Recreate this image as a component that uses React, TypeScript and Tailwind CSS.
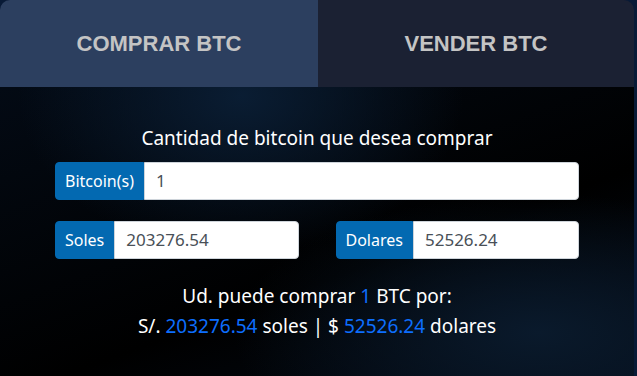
import React from "react";

const Group = ({ label, value, className = "" }: { label: string; value: string; className?: string }) => (
  <div className={`flex h-[38px] ${className}`}>
    <span className="flex items-center px-[9px] bg-[#0369b1] text-white text-[16px] rounded-l-[4px] border border-[#0369b1]">
      {label}
    </span>
    <div className="flex-1 flex items-center pl-[11px] bg-white text-[#495057] text-[17px] border border-[#ced4da] rounded-r-[4px]">
      {value}
    </div>
  </div>
);

export default function App() {
  return (
    <div className="min-h-screen bg-[#081a36] font-['Noto_Sans',sans-serif]">
      <div className="w-[634px] h-[376px] rounded-t-[10px] overflow-hidden flex flex-col">
        <div className="flex h-[87px] font-['Liberation_Sans',Arial,sans-serif] font-bold text-[22px] text-[#c4c4c4]">
          <div className="w-[318px] flex items-center justify-center bg-[#2c3f5f]">COMPRAR BTC</div>
          <div className="flex-1 flex items-center justify-center bg-[#1b2133]">VENDER BTC</div>
        </div>
        <div className="flex-1 bg-black bg-[radial-gradient(ellipse_at_38%_3%,#0a1d33_0%,transparent_40%),radial-gradient(ellipse_at_85%_85%,#0a1a2c_0%,transparent_40%),linear-gradient(160deg,#030a14_0%,#000000_60%,#040c18_100%)] px-[55px] pt-[38px]">
          <p className="text-center text-white text-[19px] leading-[26px]">Cantidad de bitcoin que desea comprar</p>
          <Group label="Bitcoin(s)" value="1" className="mt-[11px]" />
          <div className="grid grid-cols-2 gap-[37px] mt-[21px]">
            <Group label="Soles" value="203276.54" />
            <Group label="Dolares" value="52526.24" />
          </div>
          <div className="mt-[22px] text-center text-white text-[19px] leading-[30px]">
            <p>
              Ud. puede comprar <span className="text-[#0d6efd]">1</span> BTC por:
            </p>
            <p>
              S/. <span className="text-[#0d6efd]">203276.54</span> soles | ${" "}
              <span className="text-[#0d6efd]">52526.24</span> dolares
            </p>
          </div>
        </div>
      </div>
    </div>
  );
}
